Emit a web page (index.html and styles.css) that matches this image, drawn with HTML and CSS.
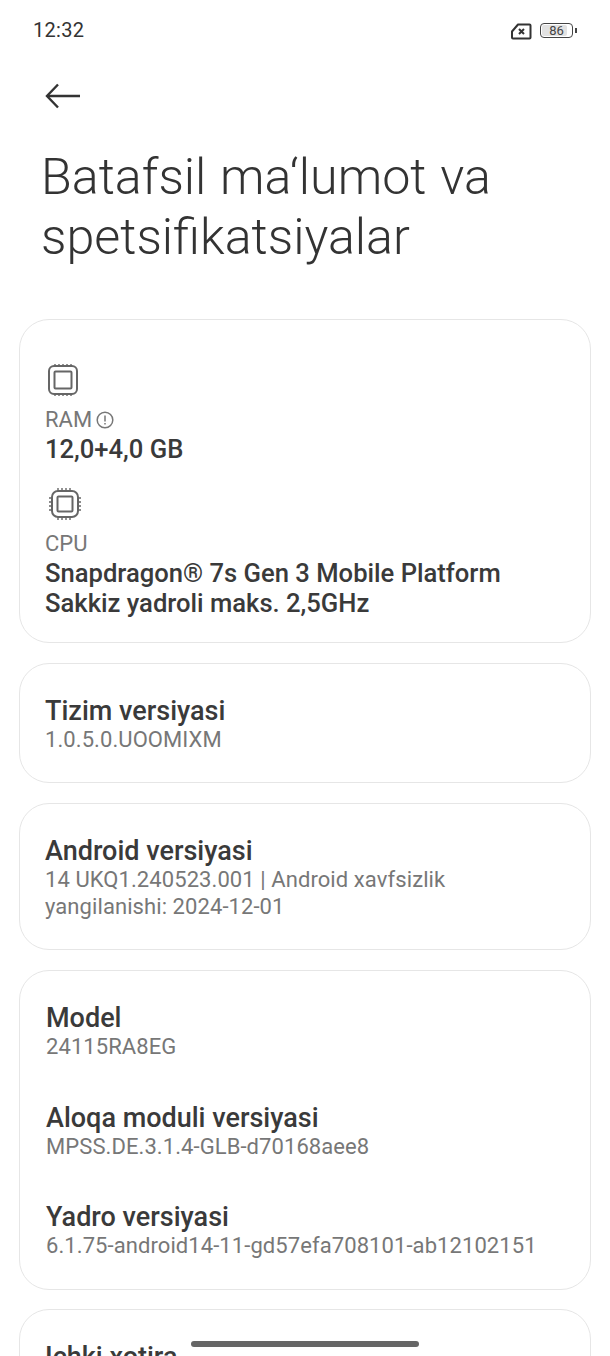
FILE: index.html
```html
<!DOCTYPE html>
<html lang="uz">

<head>
    <meta charset="UTF-8">
    <meta name="viewport" content="width=device-width, initial-scale=1.0">
    <title>Batafsil ma'lumot va spetsifikatsiyalar</title>
    <link rel="stylesheet" href="styles.css">
</head>

<body>

    <div class="status-bar">
        <span class="time">12:32</span>
        <div class="status-icons">
            <svg class="sim-icon" width="22" height="17" viewBox="0 0 22 17" fill="none" stroke="#333" stroke-width="2">
                <path d="M8 1.5H19.5a1 1 0 0 1 1 1V14.5a1 1 0 0 1-1 1H3a1 1 0 0 1-1-1V8.5Z" stroke-linejoin="round"/>
                <path d="M9 6l5 5M14 6l-5 5" stroke-width="2"/>
            </svg>
            <div class="battery">
                <div class="battery-body"><span class="battery-fill"></span><span class="battery-num">86</span></div>
                <span class="battery-tip"></span>
            </div>
        </div>
    </div>

    <div class="back-row">
        <svg width="36" height="26" viewBox="0 0 36 26" fill="none" stroke="#333" stroke-width="2.4">
            <path d="M35 13H2"/>
            <path d="M13 1.5L2 13l11 11.5"/>
        </svg>
    </div>

    <h1 class="page-title">Batafsil ma‘lumot va spetsifikatsiyalar</h1>

    <div class="card card-hw">
        <svg class="chip" width="34" height="34" viewBox="0 0 34 34" fill="none" stroke="#666" stroke-width="2">
            <rect x="3" y="3" width="28" height="28" rx="5"/>
            <rect x="8.5" y="8.5" width="17" height="17" rx="1"/>
            <path d="M9 1v2M13 1v2M17 1v2M21 1v2M25 1v2M9 31v2M13 31v2M17 31v2M21 31v2M25 31v2" stroke-width="1.4"/>
        </svg>
        <div class="label">RAM
            <svg class="info" width="18" height="18" viewBox="0 0 18 18" fill="none" stroke="#777" stroke-width="1.5">
                <circle cx="9" cy="9" r="7.8"/>
                <path d="M9 4.5v6M9 12v1.6"/>
            </svg>
        </div>
        <div class="title title-hw">12,0+4,0 GB</div>
        <svg class="chip chip-cpu" width="34" height="34" viewBox="0 0 34 34" fill="none" stroke="#666" stroke-width="2">
            <rect x="4" y="4" width="26" height="26" rx="6"/>
            <rect x="9.5" y="9.5" width="15" height="15" rx="1"/>
            <path d="M10 1v3M14 1v3M18 1v3M22 1v3M10 30v3M14 30v3M18 30v3M22 30v3M1 11h3M1 15h3M1 19h3M1 23h3M30 11h3M30 15h3M30 19h3M30 23h3" stroke-width="1.4"/>
        </svg>
        <div class="label">CPU</div>
        <div class="title title-hw">Snapdragon® 7s Gen 3 Mobile Platform<br>Sakkiz yadroli maks. 2,5GHz</div>
    </div>

    <div class="card card-single">
        <div class="title">Tizim versiyasi</div>
        <div class="value">1.0.5.0.UOOMIXM</div>
    </div>

    <div class="card card-single">
        <div class="title">Android versiyasi</div>
        <div class="value">14 UKQ1.240523.001 | Android xavfsizlik<br>yangilanishi: 2024-12-01</div>
    </div>

    <div class="card card-list">
        <div class="item">
            <div class="title">Model</div>
            <div class="value">24115RA8EG</div>
        </div>
        <div class="item">
            <div class="title">Aloqa moduli versiyasi</div>
            <div class="value">MPSS.DE.3.1.4-GLB-d70168aee8</div>
        </div>
        <div class="item">
            <div class="title">Yadro versiyasi</div>
            <div class="value">6.1.75-android14-11-gd57efa708101-ab12102151</div>
        </div>
    </div>

    <div class="card card-single card-last">
        <div class="title">Ichki xotira</div>
    </div>

    <div class="home-bar"></div>

</body>

</html>
```

FILE: styles.css
```css
html, body {
    height: 1356px;
    overflow: hidden;
}

body {
    margin: 0;
    background-color: #fff;
    font-family: Roboto, "Liberation Sans", sans-serif;
    color: #333;
}

.status-bar {
    height: 60px;
    padding: 0 33px;
    display: flex;
    justify-content: space-between;
    align-items: center;
}

.time {
    font-size: 20px;
    letter-spacing: 0.3px;
}

.status-icons {
    display: flex;
    align-items: center;
    gap: 8px;
}

.sim-icon {
    margin-top: 2px;
}

.battery {
    display: flex;
    align-items: center;
    gap: 2px;
}

.battery-body {
    position: relative;
    width: 31px;
    height: 13px;
    border: 1.5px solid #444;
    border-radius: 4px;
    display: flex;
    align-items: center;
    justify-content: center;
}

.battery-fill {
    position: absolute;
    left: 1px;
    top: 1px;
    bottom: 1px;
    width: 25px;
    background-color: #e2e2e2;
    border-radius: 2px;
}

.battery-num {
    position: relative;
    font-size: 13px;
    line-height: 13px;
    color: #444;
}

.battery-tip {
    width: 2px;
    height: 5px;
    background-color: #444;
}

.back-row {
    height: 26px;
    padding: 23px 0 0 45px;
}

.back-row svg {
    display: block;
}

.page-title {
    margin: 38px 0 0 41px;
    width: 520px;
    font-size: 50.2px;
    line-height: 60px;
    font-weight: 300;
    word-spacing: 1.5px;
    color: #333;
}

.card {
    margin: 0 19px 20px;
    padding: 0 25px;
    background-color: #fff;
    border: 1px solid #e6e6e6;
    border-radius: 30px;
}

.card-hw {
    margin-top: 52px;
    height: 324px;
    box-sizing: border-box;
    padding-top: 43px;
}

.chip {
    display: block;
    margin-left: 1px;
}

.chip-cpu {
    margin-top: 23px;
    margin-left: 3px;
}

.label {
    margin-top: 10px;
    display: flex;
    align-items: center;
    gap: 4px;
    font-size: 22px;
    line-height: 26px;
    color: #777;
}

.title {
    font-size: 27px;
    line-height: 30px;
    font-weight: 500;
    color: #3a3a3a;
}

.title-hw {
    font-size: 25.6px;
}

.label + .title {
    margin-top: 1px;
}

.card-single {
    padding-top: 32px;
    padding-bottom: 29px;
}

.value {
    font-size: 22px;
    line-height: 27px;
    color: #777;
    letter-spacing: 0.08px;
}

.card-list {
    padding: 32px 26px 0;
    height: 286px;
    margin-bottom: 19px;
}

.item {
    height: 99.5px;
}

.card-last {
    height: 60px;
}

.home-bar {
    position: fixed;
    left: 191px;
    top: 1341px;
    width: 228px;
    height: 6px;
    border-radius: 3px;
    background-color: #666;
}
```
